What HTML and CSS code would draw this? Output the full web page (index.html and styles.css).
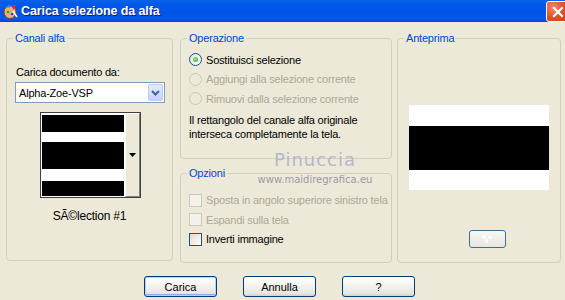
FILE: index.html
```html
<!DOCTYPE html>
<html lang="it">
<head>
  <meta charset="UTF-8" />
  <meta name="viewport" content="width=device-width, initial-scale=1.0" />
  <title>Carica selezione da alfa</title>
  <link rel="stylesheet" href="styles.css">
</head>
<body>
  <div class="window">
    <div class="titlebar">
      <svg class="app-icon" width="16" height="16" viewBox="0 0 16 16">
        <ellipse cx="8" cy="9" rx="6" ry="6.5" fill="#f0b070" stroke="#8a4a20" stroke-width="1"/>
        <path d="M3 5 L7 1 L9 4 Z" fill="#3a7de0"/>
        <path d="M9 3 L14 2 L12 7 Z" fill="#e03030"/>
        <circle cx="6" cy="9" r="1.3" fill="#2a9a3a"/>
        <circle cx="10" cy="11" r="1.3" fill="#2050c0"/>
        <path d="M11 8 L15 14" stroke="#fff" stroke-width="1.5"/>
      </svg>
      <span class="title">Carica selezione da alfa</span>
      <div class="close">
        <svg width="12" height="12" viewBox="0 0 12 12">
          <path d="M2 2 L10 10 M10 2 L2 10" stroke="#fff" stroke-width="2.2" stroke-linecap="square"/>
        </svg>
      </div>
    </div>

    <div class="content">
      <fieldset class="group channels">
        <legend>Canali alfa</legend>
        <div class="field-label">Carica documento da:</div>
        <div class="combo">
          <span class="combo-text">Alpha-Zoe-VSP</span>
          <span class="combo-btn">
            <svg width="9" height="6" viewBox="0 0 9 6">
              <path d="M1 1 L4.5 4.5 L8 1" fill="none" stroke="#4d6185" stroke-width="2"/>
            </svg>
          </span>
        </div>
        <div class="thumb">
          <div class="thumb-img"></div>
          <div class="thumb-arrow">
            <svg width="7" height="4" viewBox="0 0 7 4"><path d="M0 0 H7 L3.5 4 Z" fill="#000"/></svg>
          </div>
        </div>
        <div class="caption">SÃ©lection #1</div>
      </fieldset>

      <div class="middle">
        <fieldset class="group operation">
          <legend>Operazione</legend>
          <div class="option">
            <span class="radio checked"></span>
            <span>Sostituisci selezione</span>
          </div>
          <div class="option disabled">
            <span class="radio"></span>
            <span>Aggiungi alla selezione corrente</span>
          </div>
          <div class="option disabled">
            <span class="radio"></span>
            <span>Rimuovi dalla selezione corrente</span>
          </div>
          <p class="note">Il rettangolo del canale alfa originale<br>interseca completamente la tela.</p>
        </fieldset>

        <fieldset class="group options">
          <legend>Opzioni</legend>
          <div class="option disabled">
            <span class="check"></span>
            <span>Sposta in angolo superiore sinistro tela</span>
          </div>
          <div class="option disabled">
            <span class="check"></span>
            <span>Espandi sulla tela</span>
          </div>
          <div class="option">
            <span class="check"></span>
            <span>Inverti immagine</span>
          </div>
        </fieldset>
      </div>

      <fieldset class="group preview">
        <legend>Anteprima</legend>
        <div class="preview-img"></div>
        <div class="mini-btn">
          <svg width="16" height="10" viewBox="0 0 16 10">
            <circle cx="5" cy="3" r="2" fill="#fbfbfa"/>
            <circle cx="11" cy="3.5" r="2" fill="#fbfbfa"/>
            <circle cx="7.5" cy="7" r="2" fill="#fbfbfa"/>
          </svg>
        </div>
      </fieldset>
    </div>

    <div class="buttons">
      <button class="btn default">Carica</button>
      <button class="btn">Annulla</button>
      <button class="btn">?</button>
    </div>

    <div class="watermark">
      <div class="wm-name">Pinuccia</div>
      <div class="wm-url">www.maidiregrafica.eu</div>
    </div>
  </div>
</body>
</html>
```

FILE: styles.css
```css
body {
  margin: 0;
  font-family: "Liberation Sans", Arial, sans-serif;
  font-size: 11px;
  letter-spacing: -0.2px;
  color: #000;
  background-color: #ece9d8;
}
.window {
  position: relative;
  width: 565px;
  height: 300px;
  background-color: #ece9d8;
  overflow: hidden;
}
.titlebar {
  height: 22px;
  display: flex;
  align-items: center;
  background: linear-gradient(#0a64e8 0, #0058ea 20%, #0054e3 60%, #0058ee 85%, #0046c8 100%);
}
.app-icon {
  margin-left: 2px;
  margin-right: 3px;
}
.title {
  color: #fff;
  font-weight: bold;
  font-size: 12.5px;
  letter-spacing: -0.1px;
  text-shadow: 1px 1px 0 #0a1f7a;
}
.close {
  margin-left: auto;
  margin-right: -4px;
  width: 21px;
  height: 19px;
  margin-top: 1px;
  border: 1px solid #fff;
  border-radius: 3px;
  background: radial-gradient(circle at 30% 30%, #f08a6a, #e0502a 50%, #c43c12);
  display: flex;
  align-items: center;
  justify-content: center;
}

.content {
  display: flex;
  padding: 9px 0 0 6px;
  height: 232px;
}
.group {
  margin: 0;
  padding: 0 8px 0 8px;
  border: 1px solid #d0d0bf;
  border-radius: 4px;
  min-width: 0;
}
.group legend {
  color: #0046d5;
  padding: 0 2px;
  margin-left: -2px;
  line-height: 14px;
}

.channels {
  width: 167px;
  box-sizing: border-box;
  height: 230px;
}
.field-label {
  margin-top: 21px;
  padding-left: 1px;
}
.combo {
  margin-top: 4px;
  width: 150px;
  height: 21px;
  box-sizing: border-box;
  border: 1px solid #7f9db9;
  background-color: #fff;
  display: flex;
  align-items: center;
}
.combo-text {
  flex: 1;
  padding-left: 3px;
}
.combo-btn {
  width: 15px;
  height: 17px;
  margin-right: 1px;
  box-sizing: border-box;
  border: 1px solid #b9cdf4;
  border-radius: 2px;
  background: linear-gradient(#e3ebfd, #c1d3fb);
  display: flex;
  align-items: center;
  justify-content: center;
}
.thumb {
  margin: 9px 0 0 25px;
  width: 101px;
  height: 86px;
  box-sizing: border-box;
  border: 1px solid #404040;
  background-color: #fff;
  display: flex;
}
.thumb-img {
  width: 82px;
  margin: 2px 0 1px 1px;
  background: linear-gradient(#000 0, #000 17px, #fff 17px, #fff 27px, #000 27px, #000 54px, #fff 54px, #fff 66px, #000 66px);
}
.thumb-arrow {
  flex: 1;
  margin-left: 1px;
  background-color: #ece9d8;
  border-left: 1px solid #fff;
  border-top: 1px solid #fff;
  border-right: 1px solid #808080;
  border-bottom: 1px solid #808080;
  display: flex;
  align-items: center;
  justify-content: center;
}
.caption {
  text-align: center;
  margin-top: 11px;
  margin-left: -8px;
  margin-right: -8px;
  font-size: 12px;
}

.middle {
  margin-left: 7px;
  width: 212px;
  display: flex;
  flex-direction: column;
  gap: 7px;
}
.operation {
  height: 127px;
}
.options {
  height: 95px;
}
.option {
  display: flex;
  align-items: center;
  gap: 4px;
  height: 19.5px;
  white-space: nowrap;
}
.operation .option:first-of-type {
  margin-top: 5px;
}
.options .option:first-of-type {
  margin-top: 10px;
}
.option.disabled {
  color: #aca899;
}
.radio {
  flex: none;
  width: 13px;
  height: 13px;
  box-sizing: border-box;
  border-radius: 50%;
  border: 1px solid #1c5180;
  background: radial-gradient(circle at 65% 65%, #fff, #dcdcd6);
  position: relative;
}
.radio.checked::after {
  content: "";
  position: absolute;
  left: 3px;
  top: 3px;
  width: 5px;
  height: 5px;
  border-radius: 50%;
  background: radial-gradient(circle at 40% 40%, #8cf08c, #21a121);
}
.disabled .radio {
  border-color: #cac8bb;
  background: #ece9d8;
}
.check {
  flex: none;
  width: 13px;
  height: 13px;
  box-sizing: border-box;
  border: 1px solid #1c5180;
  background: linear-gradient(135deg, #dcdcd7, #fff);
}
.disabled .check {
  border-color: #cac8bb;
  background: #f2f1ea;
}
.note {
  margin: 4px 0 0;
  line-height: 14px;
}

.preview {
  margin-left: 5px;
  width: 164px;
  box-sizing: border-box;
  height: 232px;
  display: flex;
  flex-direction: column;
  align-items: center;
}
.preview-img {
  margin-top: 60px;
  width: 140px;
  height: 85px;
  background: linear-gradient(#fff 0, #fff 21px, #000 21px, #000 65px, #fff 65px);
}
.mini-btn {
  margin-top: 40px;
  margin-left: 16px;
  width: 37px;
  height: 18px;
  box-sizing: border-box;
  border: 1px solid #4a6a8a;
  border-radius: 3px;
  background: linear-gradient(#f6f6f3, #e8e7df);
  display: flex;
  align-items: center;
  justify-content: center;
}

.buttons {
  display: flex;
  gap: 26px;
  padding: 13px 0 0 144px;
}
.btn {
  width: 73px;
  height: 21px;
  padding: 0;
  font-family: "Liberation Sans", Arial, sans-serif;
  font-size: 11px;
  color: #000;
  border: 1px solid #003c74;
  border-radius: 3px;
  background: linear-gradient(#fff 0, #f4f4f0 40%, #e8e7e0 85%, #d6d0c5 100%);
}
.btn.default {
  box-shadow: inset 0 0 0 1px #b9d1f9, inset 0 -1px 0 1px #89adf0;
}

.watermark {
  position: absolute;
  left: 254px;
  top: 150px;
  width: 122px;
  text-align: center;
  pointer-events: none;
}
.wm-name {
  font-family: "DejaVu Sans", sans-serif;
  font-size: 18px;
  letter-spacing: 1px;
  color: #b5b8c8;
  line-height: 20px;
}
.wm-url {
  font-family: "DejaVu Sans", sans-serif;
  font-size: 10px;
  letter-spacing: 0;
  color: #9a9aaa;
  line-height: 12px;
  margin-top: 4px;
}
```
